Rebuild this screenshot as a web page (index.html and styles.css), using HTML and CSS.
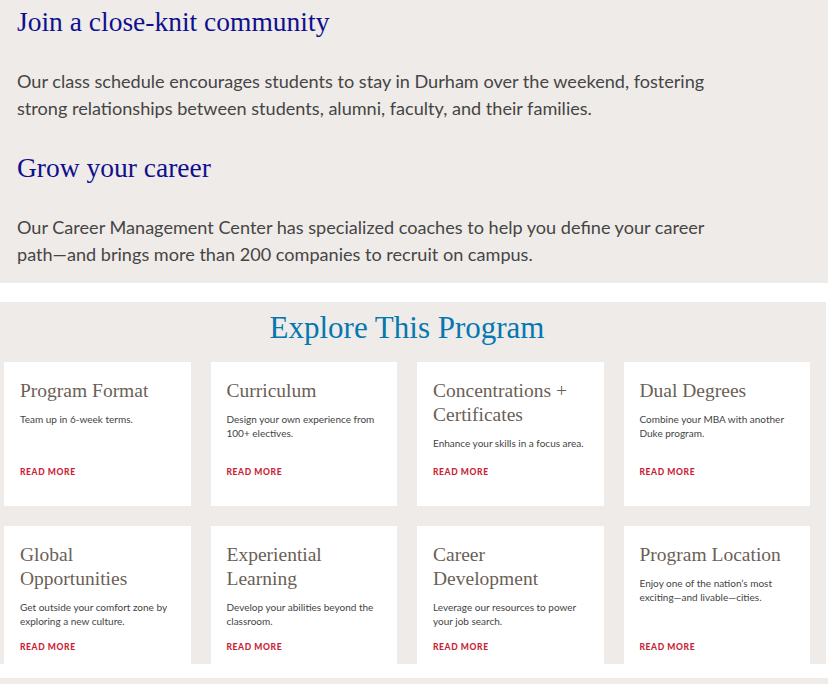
FILE: index.html
```html
<!DOCTYPE html>
<html lang="en">
<head>
<meta charset="utf-8">
<title>Explore This Program</title>
<link rel="stylesheet" href="styles.css">
</head>
<body>
<section class="intro">
  <h2 class="intro-title">Join a close-knit community</h2>
  <p class="intro-text">Our class schedule encourages students to stay in Durham over the weekend, fostering strong relationships between students, alumni, faculty, and their families.</p>
  <h2 class="intro-title">Grow your career</h2>
  <p class="intro-text">Our Career Management Center has specialized coaches to help you define your career path—and brings more than 200 companies to recruit on campus.</p>
</section>

<section class="explore">
  <h2 class="explore-title">Explore This Program</h2>
  <div class="cards">
    <div class="card">
      <h3 class="card-title">Program Format</h3>
      <p class="card-text">Team up in 6-week terms.</p>
      <a class="card-link" href="#">READ MORE</a>
    </div>
    <div class="card">
      <h3 class="card-title">Curriculum</h3>
      <p class="card-text">Design your own experience from 100+ electives.</p>
      <a class="card-link" href="#">READ MORE</a>
    </div>
    <div class="card">
      <h3 class="card-title">Concentrations + Certificates</h3>
      <p class="card-text">Enhance your skills in a focus area.</p>
      <a class="card-link" href="#">READ MORE</a>
    </div>
    <div class="card">
      <h3 class="card-title">Dual Degrees</h3>
      <p class="card-text">Combine your MBA with another Duke program.</p>
      <a class="card-link" href="#">READ MORE</a>
    </div>
    <div class="card">
      <h3 class="card-title">Global Opportunities</h3>
      <p class="card-text">Get outside your comfort zone by exploring a new culture.</p>
      <a class="card-link" href="#">READ MORE</a>
    </div>
    <div class="card">
      <h3 class="card-title">Experiential Learning</h3>
      <p class="card-text">Develop your abilities beyond the classroom.</p>
      <a class="card-link" href="#">READ MORE</a>
    </div>
    <div class="card">
      <h3 class="card-title">Career Development</h3>
      <p class="card-text">Leverage our resources to power your job search.</p>
      <a class="card-link" href="#">READ MORE</a>
    </div>
    <div class="card">
      <h3 class="card-title">Program Location</h3>
      <p class="card-text">Enjoy one of the nation’s most exciting—and livable—cities.</p>
      <a class="card-link" href="#">READ MORE</a>
    </div>
  </div>
</section>

<div class="strip"></div>
</body>
</html>
```

FILE: styles.css
```css
* {
  box-sizing: border-box;
}

html, body {
  margin: 0;
  padding: 0;
  background: #ffffff;
}

body {
  width: 833px;
  height: 684px;
  overflow: hidden;
  font-family: Lato, "Open Sans", sans-serif;
}

.intro {
  width: 828px;
  height: 283px;
  background: #efebe8;
  padding: 6px 17px 0;
}

.intro-title {
  margin: 0;
  font-family: "Liberation Serif", serif;
  font-weight: normal;
  font-size: 27.5px;
  line-height: 32px;
  color: #10108e;
}

.intro-text {
  margin: 30px 0 30px;
  font-size: 18.1px;
  line-height: 27px;
  color: #454545;
  max-width: 710px;
}

.explore {
  margin-top: 19px;
  width: 826px;
  height: 362px;
  overflow: hidden;
  background: #efebe8;
  padding: 8px 16px 0 4px;
}

.explore-title {
  margin: 0 0 16px;
  text-align: center;
  font-family: "Liberation Serif", serif;
  font-weight: normal;
  font-size: 31px;
  line-height: 36px;
  color: #0577b1;
}

.cards {
  display: grid;
  grid-template-columns: repeat(4, 1fr);
  gap: 20px;
}

.card {
  background: #ffffff;
  min-height: 144px;
  padding: 17px 14px 28px 16px;
  display: flex;
  flex-direction: column;
}

.card-title {
  margin: 0;
  font-family: "Liberation Serif", serif;
  font-weight: normal;
  font-size: 19.5px;
  line-height: 24px;
  color: #6b5f56;
}

.card-text {
  margin: 10px 0 0;
  font-size: 10px;
  line-height: 13.5px;
  color: #444444;
}

.card-link {
  margin-top: auto;
  padding-top: 13px;
  font-size: 8.5px;
  line-height: 12px;
  font-weight: 900;
  letter-spacing: 0.6px;
  color: #c91f37;
  text-decoration: none;
}

.strip {
  margin-top: 14px;
  width: 828px;
  height: 6px;
  background: #efebe8;
}
```
